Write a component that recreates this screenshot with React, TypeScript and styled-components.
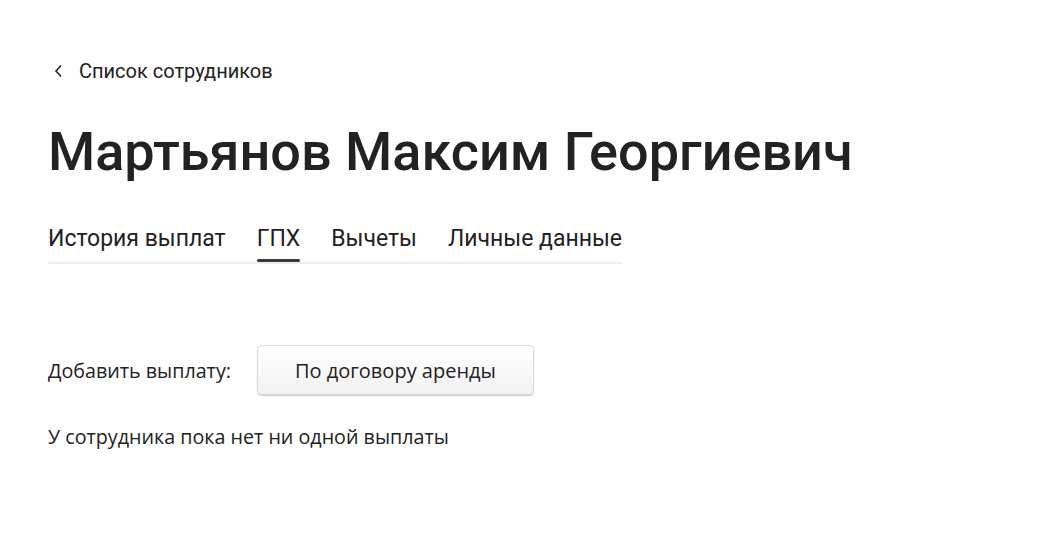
import React from "react";
import styled, { createGlobalStyle } from "styled-components";

const Global = createGlobalStyle`
  html, body { margin: 0; padding: 0; background: #fff; }
  body { font-family: Roboto, "Noto Sans", sans-serif; color: #222; }
`;

const Page = styled.div`
  padding: 56px 48px 0 48px;
  display: flex;
  flex-direction: column;
`;

const BackLink = styled.a`
  display: flex;
  align-items: center;
  gap: 15px;
  font-family: Roboto, sans-serif;
  font-size: 20px;
  color: #222;
  text-decoration: none;
  height: 30px;
  padding-left: 6px;
`;

const Title = styled.h1`
  margin: 34px 0 0 0;
  font-family: Roboto, sans-serif;
  font-weight: 500;
  font-size: 54px;
  line-height: 64px;
  color: #222;
`;

const Tabs = styled.nav`
  display: flex;
  gap: 31px;
  margin-top: 41px;
  width: 575px;
  border-bottom: 2px solid #eeeeee;
`;

const Tab = styled.div<{ $active?: boolean }>`
  font-family: Roboto, sans-serif;
  font-size: 23px;
  line-height: 28px;
  color: #222;
  padding-bottom: 9px;
  position: relative;
  &::after {
    content: "";
    display: ${(p) => (p.$active ? "block" : "none")};
    position: absolute;
    left: 0;
    right: 0;
    bottom: 0;
    height: 3px;
    border-radius: 2px;
    background: #3a3a3a;
  }
`;

const AddRow = styled.div`
  display: flex;
  align-items: center;
  gap: 26px;
  margin-top: 81px;
`;

const Label = styled.span`
  font-family: "Open Sans", sans-serif;
  font-size: 19.7px;
  color: #222;
`;

const Button = styled.button`
  width: 277px;
  height: 50px;
  border: 1px solid #d9d9d9;
  border-radius: 4px;
  background: linear-gradient(#ffffff, #f2f2f2);
  box-shadow: 0 1px 1px rgba(0, 0, 0, 0.2);
  font-family: "Open Sans", sans-serif;
  font-size: 20px;
  color: #222;
  cursor: pointer;
`;

const Empty = styled.p`
  margin: 28px 0 0 0;
  font-family: "Open Sans", sans-serif;
  font-size: 19.7px;
  color: #222;
`;

export default function App() {
  return (
    <>
      <Global />
      <Page>
        <BackLink href="#">
          <svg width="10" height="14" viewBox="0 0 10 14" fill="none">
            <path d="M7 1.5L2 7l5 5.5" stroke="#222" strokeWidth="1.6" />
          </svg>
          Список сотрудников
        </BackLink>
        <Title>Мартьянов Максим Георгиевич</Title>
        <Tabs>
          <Tab>История выплат</Tab>
          <Tab $active>ГПХ</Tab>
          <Tab>Вычеты</Tab>
          <Tab>Личные данные</Tab>
        </Tabs>
        <AddRow>
          <Label>Добавить выплату:</Label>
          <Button>По договору аренды</Button>
        </AddRow>
        <Empty>У сотрудника пока нет ни одной выплаты</Empty>
      </Page>
    </>
  );
}
